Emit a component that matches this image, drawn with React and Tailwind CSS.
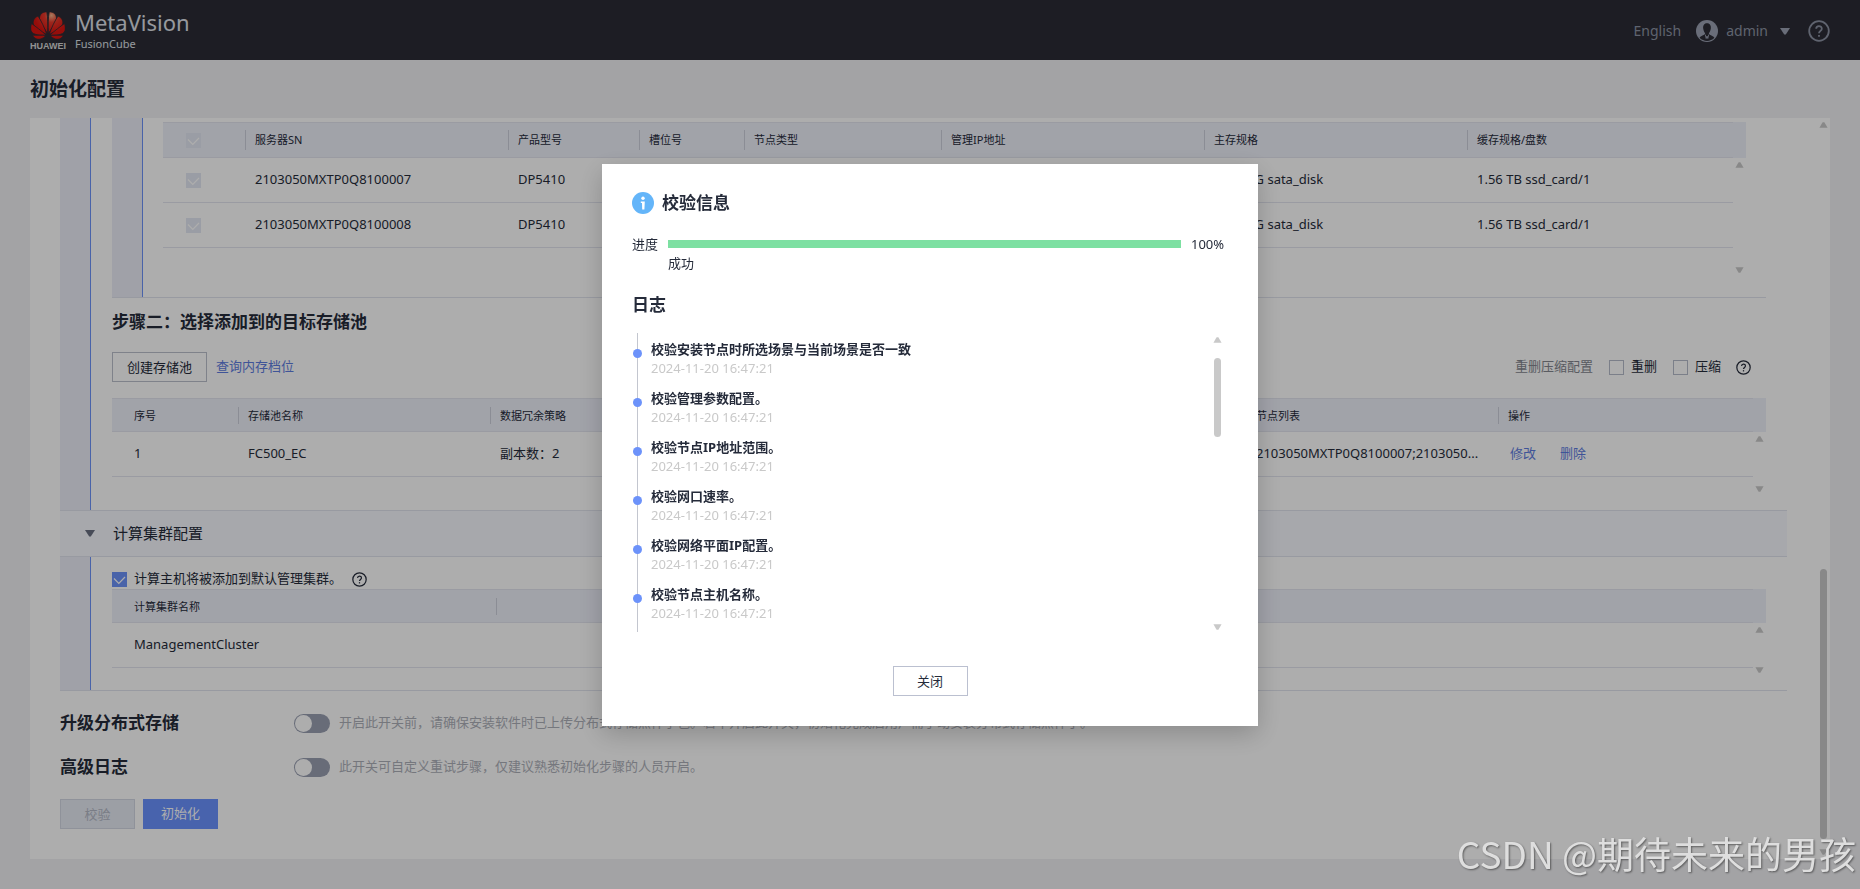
import React, { useState } from 'react';

const servers = [
    { sn: '2103050MXTP0Q8100007', model: 'DP5410', storage: '11176 G sata_disk', cache: '1.56 TB ssd_card/1' },
    { sn: '2103050MXTP0Q8100008', model: 'DP5410', storage: '11176 G sata_disk', cache: '1.56 TB ssd_card/1' },
];

const logs = [
    '校验安装节点时所选场景与当前场景是否一致',
    '校验管理参数配置。',
    '校验节点IP地址范围。',
    '校验网口速率。',
    '校验网络平面IP配置。',
    '校验节点主机名称。',
];

function HuaweiLogo() {
    return (
        <svg viewBox="0 0 68 54" className="w-[34px] h-[27px]" aria-hidden="true">
            <defs>
                <radialGradient id="petal" gradientUnits="userSpaceOnUse" cx="41" cy="7" r="34">
                    <stop offset="0" stopColor="#f5b48a" />
                    <stop offset="0.4" stopColor="#e8392b" />
                    <stop offset="1" stopColor="#dc1410" />
                </radialGradient>
            </defs>
            <g fill="url(#petal)" stroke="#2b2c35" strokeWidth="1.600">
                <path d="M33.200 43 C34 26 33.800 12 31.500 -0.500 C22 0 17 5 17 13 C18 23 27 33 33.200 43Z" />
                <path d="M34.800 43 C34 26 34.200 12 36.500 -0.500 C46 0 51 5 51 13 C50 23 41 33 34.800 43Z" />
                <path d="M31.500 44.500 C27 31 20.500 18 14 8 C5.500 12 2.500 19 5.500 26 C9.500 34.500 21 40.500 31.500 44.500Z" />
                <path d="M36.500 44.500 C41 31 47.500 18 54 8 C62.500 12 65.500 19 62.500 26 C58.500 34.500 47 40.500 36.500 44.500Z" />
                <path d="M30.500 46.300 C20 37 10 29.500 1 23 C-2 32 -1 39 4.500 42.800 C11 46.600 21 46.600 30.500 46.300Z" />
                <path d="M37.500 46.300 C48 37 58 29.500 67 23 C70 32 69 39 63.500 42.800 C57 46.600 47 46.600 37.500 46.300Z" />
                <path d="M30 46.800 C20 46.300 12 46.400 3 46.600 C7 53.500 13 55.500 18.500 54.200 C23 53.200 27 50 30 46.800Z" />
                <path d="M38 46.800 C48 46.300 56 46.400 65 46.600 C61 53.500 55 55.500 49.500 54.200 C45 53.200 41 50 38 46.800Z" />
            </g>
        </svg>
    );
}

function HelpIcon({ className }) {
    return (
        <svg viewBox="0 0 22 22" className={className} fill="none" stroke="currentColor" strokeWidth="1.800" aria-hidden="true">
            <circle cx="11" cy="11" r="9.800" />
            <path d="M8.200 8.800 C8.200 5.200 13.800 5.200 13.800 8.700 C13.800 10.800 11 11 11 13.300" />
            <path d="M11 14.900 V16.800" />
        </svg>
    );
}

function Avatar() {
    return (
        <svg viewBox="0 0 22 22" className="size-[22px]" aria-hidden="true">
            <circle cx="11" cy="11" r="11" fill="#9ba1b3" />
            <path d="M11 3.200 C7.800 3.200 6.900 5.800 7.200 8.600 C7.500 11.200 8.800 13 9.200 13.600 C8.800 15.300 5.600 15.300 3.600 17.800 C7.500 22 14.500 22 18.400 17.800 C16.400 15.300 13.200 15.300 12.800 13.600 C13.200 13 14.500 11.200 14.800 8.600 C15.100 5.800 14.200 3.200 11 3.200Z" fill="#2b2c35" />
            <path d="M9.300 14.600 L10.200 18.500 L11 16 L11.800 18.500 L12.700 14.600" fill="none" stroke="#9ba1b3" strokeWidth="0.900" />
        </svg>
    );
}

function Arrow({ down, className = '' }) {
    return (
        <svg viewBox="0 0 10 6" className={`w-[9px] h-1.5 ${className}`} fill="currentColor" aria-hidden="true">
            <path d={down ? 'M0.500 0 H9.500 L6 6 H4Z' : 'M0.500 6 H9.500 L6 0 H4Z'} />
        </svg>
    );
}

function Check({ id, label, ...rest }) {
    return (
        <span className="relative block size-[15px] shrink-0">
            <input
                id={id}
                type="checkbox"
                aria-label={label}
                className="peer block size-[15px] appearance-none border border-[#b6bccb] bg-white checked:border-[#6c92fa] checked:bg-[#6c92fa] disabled:border-[#e4e8f3] disabled:bg-[#e4e8f3]"
                {...rest}
            />
            <svg viewBox="0 0 15 15" className="pointer-events-none absolute inset-0 hidden peer-checked:block" fill="none" stroke="white" strokeWidth="1.200" aria-hidden="true">
                <path d="M2 6.500 L6.800 11.300 L13 5" />
            </svg>
        </span>
    );
}

function Toggle({ id }) {
    return (
        <input
            id={id}
            type="checkbox"
            role="switch"
            className="relative h-[19px] w-9 shrink-0 appearance-none rounded-full bg-[#9aa0b2] before:absolute before:left-px before:top-px before:size-[17px] before:rounded-full before:bg-white checked:bg-[#6c92fa] checked:before:left-[18px]"
        />
    );
}

// header cell with the short divider on its left side
function Th({ children, first, tall }) {
    return (
        <th scope="col" className="p-0 text-left text-[11px] font-normal">
            <div
                className={`${tall ? 'h-5 leading-5' : 'h-[17px] leading-[17px]'} ${first ? 'pl-[22px]' : 'border-l border-[#cdd0dc] pl-[9px]'}`}
            >
                {children}
            </div>
        </th>
    );
}

// column beside a scrolling table: header filler plus the two scroll arrows
function Gutter({ head, gap }) {
    return (
        <div className="flex w-[13px] shrink-0 flex-col items-center text-[#c9c9c9]">
            <div className={`w-full bg-[#eef0fa] ${head}`}></div>
            <Arrow className="mt-1" />
            <Arrow down className={gap} />
        </div>
    );
}

function ServerTable() {
    return (
        <div className="flex h-[179px] pt-1">
            <table className="w-full flex-1 table-fixed border-collapse self-start">
                <colgroup>
                    <col className="w-[82px]" />
                    <col className="w-[263px]" />
                    <col className="w-[131px]" />
                    <col className="w-[105px]" />
                    <col className="w-[197px]" />
                    <col className="w-[263px]" />
                    <col className="w-[263px]" />
                    <col className="w-[266px]" />
                </colgroup>
                <thead>
                    <tr className="h-[35px] border-y border-[#e3e5ef] bg-[#eef0fa]">
                        <th scope="col" className="p-0 pl-[23px]">
                            <Check label="全选" checked disabled readOnly />
                        </th>
                        <Th tall>服务器SN</Th>
                        <Th tall>产品型号</Th>
                        <Th tall>槽位号</Th>
                        <Th tall>节点类型</Th>
                        <Th tall>管理IP地址</Th>
                        <Th tall>主存规格</Th>
                        <Th tall>缓存规格/盘数</Th>
                    </tr>
                </thead>
                <tbody>
                    {servers.map((s) => (
                        <tr key={s.sn} className="h-[45px] border-b border-[#e3e5ef]">
                            <td className="p-0 pl-[23px]">
                                <Check label={s.sn} checked disabled readOnly />
                            </td>
                            <td className="p-0 pl-2.5">{s.sn}</td>
                            <td className="p-0 pl-2.5">{s.model}</td>
                            <td></td>
                            <td></td>
                            <td></td>
                            <td className="p-0 pl-2.5">{s.storage}</td>
                            <td className="p-0 pl-2.5">{s.cache}</td>
                        </tr>
                    ))}
                </tbody>
            </table>
            <Gutter head="h-9" gap="mt-[99px]" />
        </div>
    );
}

function PoolTable() {
    return (
        <div className="mt-4 flex h-28">
            <table className="w-full flex-1 table-fixed border-collapse self-start">
                <colgroup>
                    <col className="w-[126px]" />
                    <col className="w-[252px]" />
                    <col className="w-[252px]" />
                    <col className="w-[252px]" />
                    <col className="w-[252px]" />
                    <col className="w-[252px]" />
                    <col className="w-[255px]" />
                </colgroup>
                <thead>
                    <tr className="h-[33px] border-y border-[#e3e5ef] bg-[#eef0fa]">
                        <Th first>序号</Th>
                        <Th>存储池名称</Th>
                        <Th>数据冗余策略</Th>
                        <Th></Th>
                        <Th></Th>
                        <Th>节点列表</Th>
                        <Th>操作</Th>
                    </tr>
                </thead>
                <tbody>
                    <tr className="h-[45px] border-b border-[#e3e5ef]">
                        <td className="p-0 pl-[22px]">1</td>
                        <td className="p-0 pl-2.5">FC500_EC</td>
                        <td className="p-0 pl-2.5">副本数：2</td>
                        <td></td>
                        <td></td>
                        <td className="whitespace-nowrap p-0 pl-2.5">2103050MXTP0Q8100007;2103050...</td>
                        <td className="p-0 pl-3">
                            <div className="flex gap-6">
                                <a href="#edit" className="text-[#5e7ce0]">修改</a>
                                <a href="#delete" className="text-[#5e7ce0]">删除</a>
                            </div>
                        </td>
                    </tr>
                </tbody>
            </table>
            <Gutter head="h-[34px]" gap="mt-11" />
        </div>
    );
}

function ClusterTable() {
    return (
        <div className="flex h-[101px]">
            <table className="w-full flex-1 table-fixed border-collapse self-start">
                <colgroup>
                    <col className="w-[384px]" />
                    <col className="w-[1257px]" />
                </colgroup>
                <thead>
                    <tr className="h-[33px] border-y border-[#e3e5ef] bg-[#eef0fa]">
                        <Th first>计算集群名称</Th>
                        <Th></Th>
                    </tr>
                </thead>
                <tbody>
                    <tr className="h-[45px] border-b border-[#e3e5ef]">
                        <td className="p-0 pl-[22px]">ManagementCluster</td>
                        <td></td>
                    </tr>
                </tbody>
            </table>
            <Gutter head="h-[34px]" gap="mt-[34px]" />
        </div>
    );
}

function CheckDialog({ onClose }) {
    return (
        <div className="fixed inset-0 flex items-center justify-center bg-black/32">
            <div
                role="dialog"
                aria-modal="true"
                aria-labelledby="dialog-title"
                className="flex w-[656px] flex-col bg-white px-[30px] pb-[30px] pt-7 shadow-[0_8px_24px_rgba(0,0,0,0.2)]"
            >
                <div className="flex items-center gap-2">
                    <svg viewBox="0 0 22 22" className="size-[22px]" aria-hidden="true">
                        <circle cx="11" cy="11" r="11" fill="#64b5f9" />
                        <circle cx="11" cy="6.300" r="1.700" fill="white" />
                        <path d="M8.800 9.500 H12.800 L12.400 17.500 H10.200 L10 11 H8.800Z" fill="white" />
                    </svg>
                    <h2 id="dialog-title" className="text-[17px] font-bold leading-[22px]">校验信息</h2>
                </div>

                <div className="mt-5 flex gap-2.5 leading-5">
                    <span>进度</span>
                    <div className="flex-1">
                        <div className="flex h-5 items-center">
                            <div className="h-2 w-full bg-[#7de0a2]"></div>
                        </div>
                        <p className="leading-[18px]">成功</p>
                    </div>
                    <span className="w-[37px]">100%</span>
                </div>

                <h3 className="mt-[22px] text-[17px] font-bold leading-[22px]">日志</h3>

                <div className="mt-[17px] flex h-[299px] overflow-hidden">
                    <ol className="ml-[5px] flex-1 border-l border-[#c3c6cf] pt-[7px]">
                        {logs.map((log) => (
                            <li key={log} className="relative h-[49px] pl-[13px]">
                                <span className="absolute -left-[5px] top-[9px] size-[9px] rounded-full bg-[#6c92fa]"></span>
                                <p className="font-bold leading-[19px]">{log}</p>
                                <p className="leading-[19px] text-[#c9c9c9]">2024-11-20 16:47:21</p>
                            </li>
                        ))}
                    </ol>
                    <div className="mr-[6px] flex w-[9px] flex-col items-center pt-1 text-[#c9c9c9]">
                        <Arrow />
                        <div className="mt-[15px] h-[79px] w-[7px] rounded-full bg-[#c9c9c9]"></div>
                        <Arrow down className="mb-0.5 mt-auto" />
                    </div>
                </div>

                <button
                    onClick={onClose}
                    className="mt-[34px] h-[30px] w-[75px] self-center border border-[#bbc0d0] bg-white leading-7"
                >
                    关闭
                </button>
            </div>
        </div>
    );
}

function App() {
    const [open, setOpen] = useState(true);

    return (
        <div className="flex h-screen min-w-[1400px] flex-col bg-[#f0f1f4] font-['Noto_Sans','Noto_Sans_CJK_SC',sans-serif] text-[13px] text-[#252b3a]">
            <header className="flex h-[60px] shrink-0 items-center bg-[#2b2c35] px-[30px] pt-0.5">
                <div className="flex w-9 flex-col items-center">
                    <HuaweiLogo />
                    <span className="mt-0.5 font-['Liberation_Sans',sans-serif] text-[9px] font-bold leading-[10px] text-[#d8d8d8]">HUAWEI</span>
                </div>
                <div className="ml-[9px] text-[#dfe1e8]">
                    <p className="text-[22px] leading-[26px]">MetaVision</p>
                    <p className="text-[11px] leading-[18px]">FusionCube</p>
                </div>
                <div className="ml-auto flex items-center text-sm text-[#8d93a4]">
                    <button>English</button>
                    <button className="ml-[15px] flex items-center gap-2">
                        <Avatar />
                        admin
                        <svg viewBox="0 0 10 7" className="ml-1 h-[7px] w-2.5" fill="#9ba1b3" aria-hidden="true">
                            <path d="M0 0 H10 L5.800 6.500 H4.200Z" />
                        </svg>
                    </button>
                    <button className="ml-[18px]" aria-label="帮助">
                        <HelpIcon className="size-[22px]" />
                    </button>
                </div>
            </header>

            <h1 className="flex h-[58px] shrink-0 items-center px-[30px] text-[19px] font-bold">初始化配置</h1>

            <main className="mx-[30px] mb-[30px] flex min-h-0 flex-1 overflow-hidden bg-white">
                <div className="min-w-0 flex-1 pl-[30px]">
                    <section className="flex border-b border-[#e1e4ee]">
                        <div className="w-[31px] shrink-0 border-r border-[#6c92fa] bg-[#eceef8]"></div>
                        <div className="min-w-0 flex-1 pl-[21px] pr-[21px]">
                            <div className="flex border-b border-[#e1e4ee]">
                                <div className="w-[31px] shrink-0 border-r border-[#6c92fa] bg-[#eceef8]"></div>
                                <div className="min-w-0 flex-1 pl-5 pr-5">
                                    <ServerTable />
                                </div>
                            </div>
                            <h2 className="mt-3 text-[17px] font-bold leading-6">步骤二：选择添加到的目标存储池</h2>
                            <div className="mt-[18px] flex items-center">
                                <button className="h-[30px] w-[95px] border border-[#bbc0cc] leading-7">创建存储池</button>
                                <a href="#memory" className="ml-[9px] text-[#5e7ce0]">查询内存档位</a>
                                <span className="ml-auto text-[#84878f]">重删压缩配置</span>
                                <span className="ml-4 flex items-center gap-[7px]">
                                    <Check id="dedup" />
                                    <label htmlFor="dedup">重删</label>
                                </span>
                                <span className="ml-4 flex items-center gap-[7px]">
                                    <Check id="compress" />
                                    <label htmlFor="compress">压缩</label>
                                </span>
                                <HelpIcon className="ml-[15px] mr-[15px] size-[15px]" />
                            </div>
                            <PoolTable />
                        </div>
                    </section>

                    <button className="flex h-[45px] w-full items-center bg-[#f6f8fe] pl-[25px] text-[15px]">
                        <svg viewBox="0 0 10 7" className="mr-[18px] h-[7px] w-2.5" fill="#696f80" aria-hidden="true">
                            <path d="M0 0 H10 L5.800 6.500 H4.200Z" />
                        </svg>
                        计算集群配置
                    </button>

                    <section className="flex border-y border-[#e1e4ee]">
                        <div className="w-[31px] shrink-0 border-r border-[#6c92fa] bg-[#eceef8]"></div>
                        <div className="min-w-0 flex-1 pl-[21px] pr-[21px]">
                            <div className="flex h-8 items-center pt-3">
                                <Check id="cluster" defaultChecked />
                                <label htmlFor="cluster" className="ml-[7px]">计算主机将被添加到默认管理集群。</label>
                                <HelpIcon className="ml-2.5 size-[15px]" />
                            </div>
                            <ClusterTable />
                        </div>
                    </section>

                    <div className="mt-5 flex h-6 items-center">
                        <label htmlFor="upgrade" className="w-[234px] text-[17px] font-bold">升级分布式存储</label>
                        <Toggle id="upgrade" />
                        <p className="ml-[9px] text-[#adb0b9]">
                            开启此开关前，请确保安装软件时已上传分布式存储点件子包。若不开启此开关，初始化完成后用户需手动安装分布式存储点件子。
                        </p>
                    </div>
                    <div className="mt-5 flex h-6 items-center">
                        <label htmlFor="advanced" className="w-[234px] text-[17px] font-bold">高级日志</label>
                        <Toggle id="advanced" />
                        <p className="ml-[9px] text-[#adb0b9]">此开关可自定义重试步骤，仅建议熟悉初始化步骤的人员开启。</p>
                    </div>
                    <div className="mt-5 flex gap-2">
                        <button disabled className="h-[30px] w-[75px] border border-[#d3d8e4] bg-[#e6eaf4] leading-7 text-[#b4b9c6]">校验</button>
                        <button onClick={() => setOpen(true)} className="h-[30px] w-[75px] bg-[#6a92ff] text-white">初始化</button>
                    </div>
                </div>

                <div className="flex w-[43px] shrink-0 flex-col items-end pb-1 pr-0.5 pt-1 text-[#c9c9c9]">
                    <Arrow />
                    <div className="mb-2.5 mr-px mt-auto h-[270px] w-[7px] rounded-full bg-[#c9c9c9]"></div>
                    <Arrow down />
                </div>
            </main>

            {open && <CheckDialog onClose={() => setOpen(false)} />}

            <p className="pointer-events-none fixed bottom-2 right-1 font-['Noto_Sans_CJK_SC',sans-serif] text-[37px] leading-[56px] text-[#dedede] [text-shadow:1px_1px_2px_rgba(0,0,0,0.45)]">
                CSDN @期待未来的男孩
            </p>
        </div>
    );
}

export default App;
